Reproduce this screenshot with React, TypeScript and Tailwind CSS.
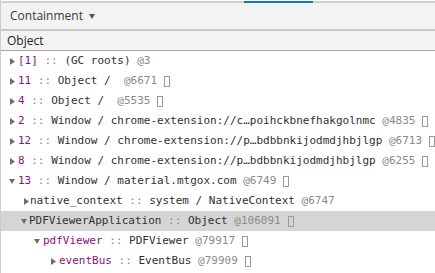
import React from "react";

type Seg = { t: string; c: "id" | "sep" | "name" | "addr" };
type Row = {
  pad: string;
  gap: string;
  open: boolean;
  segs: Seg[];
  box?: boolean;
  selected?: boolean;
};

const color: Record<Seg["c"], string> = {
  id: "text-[#881280]",
  sep: "text-[#8a8a8a]",
  name: "text-[#303030]",
  addr: "text-[#8a8a8a]",
};

const top = (id: string, name: string, addr: string, open = false, box = true): Row => ({
  pad: open ? "pl-[8px]" : "pl-[9px]",
  gap: open ? "ml-[3px]" : "ml-[3px]",
  open,
  box,
  segs: [
    { t: id, c: "id" },
    { t: " :: ", c: "sep" },
    { t: name, c: "name" },
    { t: addr, c: "addr" },
  ],
});

const rows: Row[] = [
  top("[1]", "(GC roots)", " @3", false, false),
  top("11", "Object /", "  @6671"),
  top("4", "Object /", "  @5535"),
  top("2", "Window / chrome-extension://c…poihckbnefhakgolnmc", " @4835"),
  top("12", "Window / chrome-extension://p…bdbbnkijodmdjhbjlgp", " @6713"),
  top("8", "Window / chrome-extension://p…bdbbnkijodmdjhbjlgp", " @6255"),
  top("13", "Window / material.mtgox.com", " @6749", true),
  {
    pad: "pl-[23px]",
    gap: "ml-[1px]",
    open: false,
    segs: [
      { t: "native_context", c: "name" },
      { t: " :: ", c: "sep" },
      { t: "system / NativeContext", c: "name" },
      { t: " @6747", c: "addr" },
    ],
  },
  {
    pad: "pl-[20px]",
    gap: "ml-[2px]",
    open: true,
    box: true,
    selected: true,
    segs: [
      { t: "PDFViewerApplication", c: "name" },
      { t: " :: ", c: "sep" },
      { t: "Object", c: "name" },
      { t: " @106091", c: "addr" },
    ],
  },
  {
    pad: "pl-[33px]",
    gap: "ml-[3px]",
    open: true,
    box: true,
    segs: [
      { t: "pdfViewer", c: "id" },
      { t: " :: ", c: "sep" },
      { t: "PDFViewer", c: "name" },
      { t: " @79917", c: "addr" },
    ],
  },
  {
    pad: "pl-[50px]",
    gap: "ml-[3px]",
    open: false,
    box: true,
    segs: [
      { t: "eventBus", c: "id" },
      { t: " :: ", c: "sep" },
      { t: "EventBus", c: "name" },
      { t: " @79909", c: "addr" },
    ],
  },
];

function Arrow({ open }: { open: boolean }) {
  return open ? (
    <svg width="6" height="5" viewBox="0 0 6 5" className="shrink-0">
      <path d="M0 0H6L3 5Z" fill="#6e6e6e" />
    </svg>
  ) : (
    <svg width="5" height="7" viewBox="0 0 5 7" className="shrink-0">
      <path d="M0 0L5 3.5L0 7Z" fill="#6e6e6e" />
    </svg>
  );
}

export default function App() {
  return (
    <div className="relative h-[273px] w-[435px] overflow-hidden border-l border-[#cdcdcd] bg-white font-['Open_Sans',sans-serif]">
      <div className="h-[1px] bg-white" />
      <div className="relative h-[2px] bg-[#d0d0d0]">
        <div className="absolute left-[243px] top-0 h-[2px] w-[69px] bg-[#1a73c8]" />
      </div>
      <div className="flex h-[26px] items-center bg-[#f3f3f3] pl-[9px] text-[12px] text-[#3a3a3a]">
        <span>Containment</span>
        <svg width="6" height="5" viewBox="0 0 6 5" className="ml-[6px]">
          <path d="M0 0H6L3 5Z" fill="#555" />
        </svg>
      </div>
      <div className="h-[2px] bg-[#c8c8c8]" />
      <div className="flex h-[20px] items-center border-b border-[#a8a8a8] bg-[#f3f3f3] pl-[6px] text-[12px] text-[#222]">
        Object
      </div>
      <div className="font-['DejaVu_Sans_Mono',monospace] text-[11px]">
        {rows.map((r, i) => (
          <div
            key={i}
            className={`flex h-[20px] items-center whitespace-pre ${r.pad} ${r.selected ? "bg-[#d5d5d5]" : ""}`}
          >
            <Arrow open={r.open} />
            <span className={r.gap}>
              {r.segs.map((s, j) => (
                <span key={j} className={color[s.c]}>
                  {s.t}
                </span>
              ))}
            </span>
            {r.box && (
              <span className="ml-[7px] inline-block h-[11px] w-[6px] border border-[#9a9a9a]" />
            )}
          </div>
        ))}
      </div>
    </div>
  );
}
